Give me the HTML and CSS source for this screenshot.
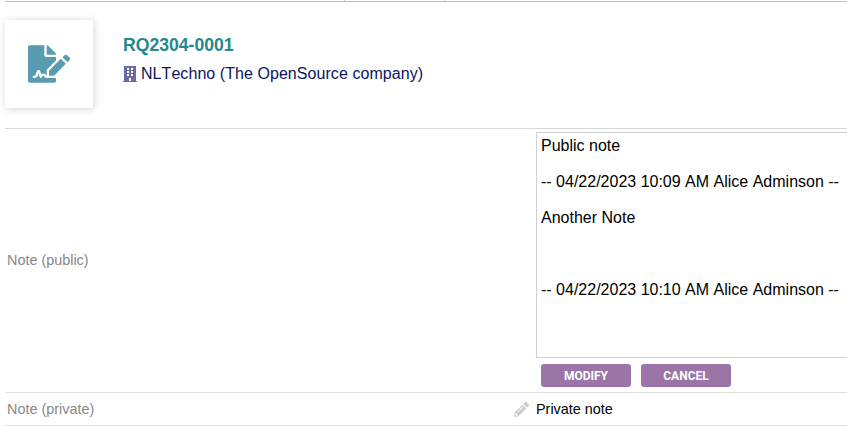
FILE: index.html
```html
<!DOCTYPE html>
<html lang="en">
<head>
<meta charset="utf-8">
<title>RQ2304-0001</title>
<link rel="stylesheet" href="styles.css">
</head>
<body>
<div class="tabs"><span class="tab"></span><span class="tab tab-next"></span></div>
<main class="content">
  <header class="banner">
    <div class="photo">
      <svg class="icon-sign" viewBox="0 0 576 512"><path d="M218.17 424.14c-2.95-5.92-8.09-6.52-10.17-6.52s-7.22.59-10.02 6.19l-7.67 15.34c-6.37 12.78-25.03 11.37-29.48-2.09L144 386.59l-10.61 31.88c-5.89 17.66-22.38 29.53-41 29.53H80c-8.84 0-16-7.16-16-16s7.16-16 16-16h12.39c4.83 0 9.11-3.08 10.64-7.66l18.19-54.64c3.3-9.81 12.44-16.41 22.78-16.41s19.48 6.59 22.77 16.41l13.88 41.64c19.75-16.19 54.06-9.7 66 14.16 1.89 3.78 5.49 5.95 9.36 6.26v-82.12l128-127.09V160H248c-13.2 0-24-10.8-24-24V0H24C10.7 0 0 10.7 0 24v464c0 13.3 10.7 24 24 24h336c13.3 0 24-10.7 24-24v-40l-128-.11c-16.12-.31-30.58-9.28-37.83-23.75zM384 121.9c0-6.3-2.5-12.4-7-16.9L279.1 7c-4.5-4.5-10.6-7-17-7H256v128h128v-6.1zm-96 225.06V416h68.99l161.68-162.78-67.88-67.88L288 346.96zm280.54-179.63l-31.87-31.87c-9.94-9.94-26.07-9.94-36.01 0l-27.25 27.25 67.88 67.88 27.25-27.25c9.95-9.94 9.95-26.07 0-36.01z"/></svg>
    </div>
    <div class="identity">
      <h1 class="ref">RQ2304-0001</h1>
      <div class="company">
        <svg class="icon-building" viewBox="0 0 14 16"><path fill-rule="evenodd" d="M1 0h12v15h1v1H0v-1h1zM4 2v2h2V2zM8 2v2h2V2zM4 5v2h2V5zM8 5v2h2V5zM4 8v2h2V8zM8 8v2h2V8zM6 12v3h2v-3z"/></svg>
        <span>NLTechno (The OpenSource company)</span>
      </div>
    </div>
  </header>
  <section class="row row-public">
    <div class="label">Note (public)</div>
    <div class="value">
      <div class="editor">Public note

-- 04/22/2023 10:09 AM Alice Adminson --

Another Note



-- 04/22/2023 10:10 AM Alice Adminson --</div>
      <div class="actions">
        <button class="button">MODIFY</button>
        <button class="button">CANCEL</button>
      </div>
    </div>
  </section>
  <section class="row row-private">
    <div class="label">Note (private)</div>
    <svg class="icon-pencil" viewBox="0 0 512 512"><path d="M497.9 142.1l-46.1 46.1c-4.7 4.7-12.3 4.7-17 0l-111-111c-4.7-4.7-4.7-12.3 0-17l46.1-46.1c18.7-18.7 49.1-18.7 67.9 0l60.1 60.1c18.8 18.7 18.8 49.1 0 67.9zM284.2 99.8L21.6 362.4.4 483.9c-2.9 16.4 11.4 30.6 27.8 27.8l121.5-21.3 262.6-262.6c4.7-4.7 4.7-12.3 0-17l-111-111c-4.8-4.7-12.4-4.7-17.1 0zM124.1 339.9c-5.5-5.5-5.5-14.3 0-19.8l154-154c5.5-5.5 14.3-5.5 19.8 0s5.5 14.3 0 19.8l-154 154c-5.5 5.5-14.3 5.5-19.8 0zM88 424h48v36.3l-64.5 11.3-31.1-31.1L51.700 376H88v48z"/></svg>
    <div class="value">Private note</div>
  </section>
</main>
</body>
</html>
```
FILE: styles.css
```css
* { box-sizing: border-box; }
body {
  margin: 0;
  background: #fff;
  color: #000;
  font-family: "Liberation Sans", Arial, sans-serif;
  font-kerning: none;
  overflow: hidden;
}
.tabs {
  display: flex;
  height: 2px;
  margin-left: 5px;
  border-bottom: 1px solid #bbb;
}
.tab { width: 340px; border-right: 1px solid #ccc; }
.tab-next { width: 100px; }
.content { padding-left: 5px; }
.banner {
  display: flex;
  height: 127px;
  padding-top: 18px;
  border-bottom: 1px solid #d8d8d8;
}
.photo {
  display: flex;
  align-items: center;
  justify-content: center;
  width: 88px;
  height: 88px;
  background: #fff;
  box-shadow: 1px 1px 8px #d4d4d4;
}
.icon-sign { width: 42px; height: 38px; fill: #599caf; }
.identity { margin-left: 30px; padding-top: 14px; }
.ref {
  margin: 0;
  color: #25888b;
  font-size: 17.6px;
  line-height: 22px;
}
.company {
  display: flex;
  align-items: center;
  gap: 4px;
  height: 20px;
  margin-top: 8px;
  color: #0a1464;
  font-size: 16px;
  letter-spacing: 0.06px;
  white-space: nowrap;
}
.icon-building { width: 14px; height: 16px; margin-top: -1px; fill: #6c6aa8; }
.row {
  display: flex;
  align-items: center;
  border-bottom: 1px solid #e0e0e0;
}
.row-public { height: 264px; }
.row-private { height: 33px; }
.label {
  width: 531px;
  padding-left: 2px;
  color: #888;
  font-size: 14.4px;
}
.row-public .label { padding-bottom: 2px; }
.row-public .value { flex: 1; align-self: stretch; padding-top: 3px; }
.editor {
  height: 226px;
  padding: 4px;
  border: 1px solid #d0d0d0;
  border-right: 0;
  font-size: 16px;
  line-height: 18px;
  white-space: pre;
}
.actions { display: flex; gap: 10px; padding: 6px 0 0 5px; }
.button {
  width: 90px;
  height: 23px;
  padding: 0;
  border: 0;
  border-radius: 3px;
  background: #9b74a8;
  color: #fff;
  font: bold 12px Roboto, "Liberation Sans", sans-serif;
  font-kerning: none;
}
.row-private .label { width: 509px; }
.row-private .value { font-size: 14.4px; }
.icon-pencil { width: 15px; height: 15px; margin-right: 7px; fill: #ccc; }
```
